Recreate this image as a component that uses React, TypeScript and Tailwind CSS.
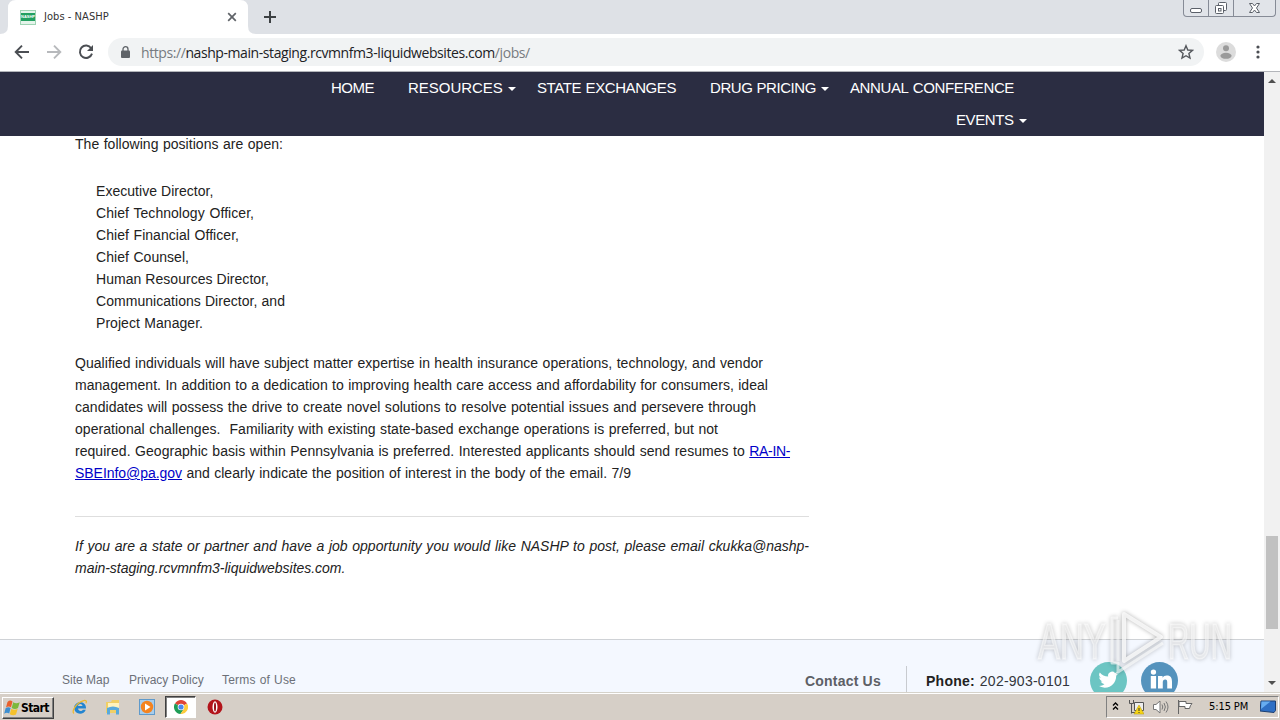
import clsx from "clsx";
import React from "react";

const positions = [
    { text: "Executive Director,", w: "w-[117px]" },
    { text: "Chief Technology Officer,", w: "w-[158px]" },
    { text: "Chief Financial Officer,", w: "w-[143px]" },
    { text: "Chief Counsel,", w: "w-[93px]" },
    { text: "Human Resources Director,", w: "w-[173px]" },
    { text: "Communications Director, and", w: "w-[189px]" },
    { text: "Project Manager.", w: "w-[107px]" },
];

function Line({ w, className, children }: { w: string; className?: string; children: React.ReactNode }) {
    return (
        <span className={clsx("block whitespace-nowrap [text-align-last:justify]", w, className)}>{children}</span>
    );
}

function Caret() {
    return <span className="ml-[5px] mt-px h-0 w-0 border-x-[4px] border-t-[4px] border-x-transparent border-t-white" />;
}

function TabStrip() {
    return (
        <div className="relative flex h-[34px] shrink-0 bg-[#dee1e6]">
            <svg className="h-[34px] w-[256px] shrink-0" viewBox="0 0 256 34">
                <path d="M0 34q8 0 8-8V8q0-8 8-8h224q8 0 8 8v18q0 8 8 8z" fill="#fff" />
            </svg>
            <div className="absolute left-5 top-0 flex h-[34px] items-center">
                <div className="flex h-[15px] w-4 flex-col justify-center border border-[#9fd3b4] bg-[#e4f4ea]">
                    <div className="flex h-[8px] items-center justify-center bg-[#22a060] font-['Liberation_Sans'] text-[4px] font-bold text-white">
                        NASHP
                    </div>
                </div>
                <span className="ml-2 w-[65px] whitespace-nowrap font-['DejaVu_Sans_Condensed','DejaVu_Sans',sans-serif] text-[11px] tracking-[0.05px] text-[#333]">
                    Jobs - NASHP
                </span>
            </div>
            <svg className="absolute left-[227px] top-3 h-[10px] w-[10px]" viewBox="0 0 10 10">
                <path d="M1.2 1.2l7.6 7.6M8.8 1.2L1.2 8.8" stroke="#5f6368" strokeWidth="1.7" />
            </svg>
            <svg className="ml-[7px] mt-[10px] h-[14px] w-[14px]" viewBox="0 0 14 14">
                <path d="M7 1v12M1 7h12" stroke="#3c4043" strokeWidth="2" />
            </svg>
            <div className="absolute right-[4px] top-0 flex h-[17px] w-[93px] rounded-b-[4px] border border-t-0 border-[#868b96] bg-[#e1e4e9]">
                <svg className="h-full w-full" viewBox="0 0 91 16" fill="none" stroke="#5b6069">
                    <path d="M24.5 0v16M49.5 0v16" stroke="#868b96" />
                    <rect x="6.5" y="8.5" width="11" height="4" rx="1.5" fill="#fff" />
                    <rect x="34.5" y="2.5" width="8" height="8" rx="1" fill="#fff" />
                    <rect x="31.5" y="5.5" width="8" height="8" rx="1" fill="#fff" />
                    <rect x="34.5" y="8.5" width="2.5" height="2.5" />
                    <path d="M65.5 3.500h3l2 2.500 2-2.500h3l-3 4.500 3 4.500h-3l-2-2.500-2 2.500h-3l3-4.500z" fill="#fff" />
                </svg>
            </div>
        </div>
    );
}

function Toolbar() {
    return (
        <div className="flex h-[38px] shrink-0 items-center border-b border-[#b3b5ba] bg-white pb-px">
            <svg className="ml-[14px] h-4 w-4" viewBox="0 0 16 16" fill="none" stroke="#4b4e53" strokeWidth="1.9">
                <path d="M15 8H2.5M8 1.7L1.7 8 8 14.3" />
            </svg>
            <svg className="ml-4 h-4 w-4" viewBox="0 0 16 16" fill="none" stroke="#b7b9bc" strokeWidth="1.9">
                <path d="M1 8h12.500M8 1.700L14.300 8 8 14.300" />
            </svg>
            <svg className="ml-4 h-4 w-4" viewBox="0 0 16 16" fill="none" stroke="#4b4e53" strokeWidth="1.9">
                <path d="M13.200 4.200A6.200 6.200 0 1 0 14 9.600" />
                <path d="M15 1v6H9z" fill="#4b4e53" stroke="none" />
            </svg>
            <div className="ml-[14px] flex h-[28px] w-[1096px] items-center rounded-full bg-[#f1f3f4]">
                <svg className="ml-[13px] h-3 w-[9px]" viewBox="0 0 9 12">
                    <path d="M2 5V3.200a2.500 2.500 0 0 1 5 0V5" fill="none" stroke="#5f6368" strokeWidth="1.300" />
                    <rect y="4.500" width="9" height="7.500" rx="1" fill="#5f6368" />
                </svg>
                <div className="ml-[11px] w-[389px] whitespace-nowrap font-['Open_Sans','Noto_Sans',sans-serif] text-[14px] tracking-[-0.42px] text-[#777b80]">
                    https://<span className="text-[#202124]">nashp-main-staging.rcvmnfm3-liquidwebsites.com</span>/jobs/
                </div>
                <svg className="ml-auto mr-[10px] h-4 w-4" viewBox="0 0 16 16" fill="none" stroke="#55585d" strokeWidth="1.400">
                    <path d="M8 1.700l1.800 4.300 4.700.4-3.600 3.100 1.100 4.600L8 11.700l-4 2.400 1.100-4.600L1.500 6.400l4.700-.4z" />
                </svg>
            </div>
            <svg className="ml-3 h-5 w-5" viewBox="0 0 20 20">
                <circle cx="10" cy="10" r="10" fill="#dcdcdc" />
                <circle cx="10" cy="6.200" r="3" fill="#9a9a9a" />
                <ellipse cx="10" cy="13.800" rx="5.600" ry="3" fill="#9a9a9a" />
            </svg>
            <svg className="ml-5 h-[14px] w-1" viewBox="0 0 4 14" fill="#4b4e53">
                <circle cx="2" cy="2" r="1.600" />
                <circle cx="2" cy="7" r="1.600" />
                <circle cx="2" cy="12" r="1.600" />
            </svg>
        </div>
    );
}

function SiteNav() {
    return (
        <nav className="relative z-10 h-16 bg-[#2b2d42] text-[15px] leading-8 text-white">
            <div className="flex h-8 items-center pl-[331px]">
                <Line w="w-[43px]" className="tracking-[-0.5px]">HOME</Line>
                <Line w="w-[95px]" className="ml-[34px] tracking-[-0.02px]">RESOURCES</Line>
                <Caret />
                <Line w="w-[139px]" className="ml-[21px] tracking-[-0.42px]">STATE EXCHANGES</Line>
                <Line w="w-[106px]" className="ml-[34px] tracking-[-0.42px]">DRUG PRICING</Line>
                <Caret />
                <Line w="w-[164px]" className="ml-[21px] tracking-[-0.38px]">ANNUAL CONFERENCE</Line>
            </div>
            <div className="flex h-8 items-center pl-[956px]">
                <Line w="w-[58px]" className="tracking-[-0.4px]">EVENTS</Line>
                <Caret />
            </div>
        </nav>
    );
}

function Article() {
    return (
        <main className="-mt-[3px] h-[506px] pl-[75px] text-[14px] leading-[22px] tracking-[0.04px] text-[#222]">
            <Line w="w-[208px]">The following positions are open:</Line>
            <ul className="ml-[21px] mt-[25px]">
                {positions.map((p) => (
                    <li key={p.text}>
                        <Line w={p.w}>{p.text}</Line>
                    </li>
                ))}
            </ul>
            <p className="mt-[18px]">
                <Line w="w-[688px]">Qualified individuals will have subject matter expertise in health insurance operations, technology, and vendor</Line>
                <Line w="w-[693px]">management. In addition to a dedication to improving health care access and affordability for consumers, ideal</Line>
                <Line w="w-[681px]">candidates will possess the drive to create novel solutions to resolve potential issues and persevere through</Line>
                <Line w="w-[643px]">operational challenges.&nbsp; Familiarity with existing state-based exchange operations is preferred, but not</Line>
                <Line w="w-[715px]">
                    required. Geographic basis within Pennsylvania is preferred. Interested applicants should send resumes to{" "}
                    <a className="tracking-[-0.35px] text-[#0000c8] underline">RA-IN-</a>
                </Line>
                <Line w="w-[556px]">
                    <a className="tracking-[-0.04px] text-[#0000c8] underline">SBEInfo@pa.gov</a> and clearly indicate the position of interest in the body of the email. 7/9
                </Line>
            </p>
            <hr className="mt-[32px] w-[734px] border-t border-[#dedede]" />
            <p className="mt-[18px] italic">
                <Line w="w-[734px]" className="tracking-[0.02px]">If you are a state or partner and have a job opportunity you would like NASHP to post, please email <span className="tracking-[-0.02px]">ckukka@nashp-</span></Line>
                <Line w="w-[271px]" className="tracking-[-0.03px]">main-staging.rcvmnfm3-liquidwebsites.com.</Line>
            </p>
        </main>
    );
}

function SiteFooter() {
    return (
        <footer className="flex h-[53px] overflow-hidden border-t border-[#cfd2d6] bg-[#f4f8ff] text-[#6c7078]">
            <div className="ml-[62px] mt-[30px] flex h-5 text-[12px] leading-5">
                <Line w="w-[47px]">Site Map</Line>
                <Line w="w-[74px]" className="ml-5">Privacy Policy</Line>
                <Line w="w-[74px]" className="ml-[19px] tracking-[0.2px]">Terms of Use</Line>
            </div>
            <div className="ml-[509px] mt-[31px] w-[77px] whitespace-nowrap text-[14px] font-bold leading-5 tracking-[0.2px] text-[#5d6066]">Contact Us</div>
            <div className="ml-6 mt-[26px] w-px bg-[#c8cbd0]" />
            <div className="ml-[19px] mt-[31px] h-5 text-[14px] leading-5 text-[#33363c]">
                <Line w="w-[144px]" className="tracking-[0.25px]">
                    <b className="text-[#222]">Phone:</b> 202-903-0101
                </Line>
            </div>
            <svg className="ml-5 mt-[22px] h-[37px] w-[37px] shrink-0" viewBox="0 0 37 37">
                <circle cx="18.500" cy="18.500" r="18.500" fill="#6cc5c3" />
                <path
                    transform="translate(8.500 7.800) scale(.82)"
                    d="M23.950 4.570a10 10 0 0 1-2.820.780 4.960 4.960 0 0 0 2.160-2.720c-.950.550-2 .950-3.130 1.180a4.920 4.920 0 0 0-8.380 4.480C7.690 8.090 4.070 6.130 1.640 3.160a4.820 4.820 0 0 0 1.520 6.570 4.900 4.900 0 0 1-2.230-.610v.060c0 2.380 1.700 4.370 3.950 4.820a5 5 0 0 1-2.210.090 4.940 4.940 0 0 0 4.600 3.420A9.870 9.870 0 0 1 0 19.540a13.990 13.990 0 0 0 7.560 2.210c9.050 0 14-7.500 14-13.980l-.020-.640a9.940 9.940 0 0 0 2.410-2.560z"
                    fill="#fff"
                />
            </svg>
            <svg className="ml-[14px] mt-[22px] h-[37px] w-[37px] shrink-0" viewBox="0 0 37 37">
                <circle cx="18.500" cy="18.500" r="18.500" fill="#5593bd" />
                <g fill="#fff" transform="translate(-.800 -1.800) scale(1.060)">
                    <circle cx="12.500" cy="11.200" r="2.500" />
                    <path d="M10 14.800h5v12h-5zM16.800 14.800h4.300v1.700c.8-1.300 2.200-2 4-2 3.900 0 4.900 2.500 4.900 5.900v6.400h-4.500v-6c0-1.700-.3-2.700-1.900-2.700s-2.300 1-2.300 2.700v6h-4.500z" />
                </g>
            </svg>
        </footer>
    );
}

function ScrollBar() {
    return (
        <div className="flex w-4 shrink-0 flex-col items-center bg-[#f1f1f1]">
            <span className="mt-[7px] h-0 w-0 border-x-[4px] border-b-[4px] border-x-transparent border-b-[#505050]" />
            <div className="mt-[453px] h-[93px] w-3 bg-[#c1c1c1]" />
            <span className="mt-[52px] h-0 w-0 border-x-[4px] border-t-[4px] border-x-transparent border-t-[#505050]" />
        </div>
    );
}

function Watermark() {
    return (
        <div className="absolute left-[1038px] top-[606px] flex h-[72px] w-[194px] items-center font-['Liberation_Sans',sans-serif] text-[50px] leading-none text-white/50 drop-shadow-[0_0_2px_rgba(0,0,0,0.4)]">
            <span className="mt-[-1px] w-[68px] origin-left scale-x-[.66] [-webkit-text-stroke:1.5px_rgba(255,255,255,0.4)]">ANY</span>
            <svg className="h-[72px] w-[62px] shrink-0" viewBox="0 0 62 72" fill="none" stroke="#fff" strokeLinejoin="round">
                <path d="M18 8L55 31 18 55z" strokeOpacity=".75" strokeWidth="4" />
                <path d="M12 12H6v45h6v9l45-29" strokeOpacity=".6" strokeWidth="3" />
                <path d="M12 14v41" strokeOpacity=".5" strokeWidth="3" />
            </svg>
            <span className="mt-[-1px] w-[64px] origin-left scale-x-[.59] [-webkit-text-stroke:1.5px_rgba(255,255,255,0.4)]">RUN</span>
        </div>
    );
}

function Taskbar() {
    return (
        <div className="flex h-7 shrink-0 items-center border-t border-[#d5d2ca] bg-[#d6cfc7] font-['DejaVu_Sans_Condensed','DejaVu_Sans',sans-serif] shadow-[inset_0_1px_0_#fff]">
            <div className="ml-[2px] mt-[2px] flex h-[22px] w-[52px] items-center border border-b-[#404040] border-l-white border-r-[#404040] border-t-white shadow-[inset_-1px_-1px_0_#808080]">
                <svg className="ml-[1px] h-4 w-4 shrink-0" viewBox="0 0 16 16">
                    <path d="M3.500 2q2.500-2.500 5-.5L7 7.300q-2.500-1.500-5 .2z" fill="#e8602c" />
                    <path d="M9.200 2.200q3 2 6.500 0L14 8q-3 1.800-6.300 0z" fill="#7cb83a" />
                    <path d="M1.600 8.300q2.700-1.800 5-.2L5.200 13.500q-2.500-1.500-5 .3z" fill="#3d8ed0" />
                    <path d="M7.300 8.700q3 2 6.400 0L12 14.500q-3 1.800-6.200-.3z" fill="#f6c22c" />
                </svg>
                <span className="ml-px text-[12px] font-bold tracking-[-0.6px] text-black">Start</span>
            </div>
            <svg className="ml-[18px] mt-px h-4 w-4" viewBox="0 0 16 16" fill="none">
                <path d="M14 9.500H6c.3 2.800 3.500 3.300 5 1.200h2.800C11.800 16.800 2 15.800 2.200 8.600 2.400 1.500 14.500 1 14 9.500zM6 7h4.500c-.2-2.700-4.200-2.700-4.500 0z" fill="#2385d0" fillRule="evenodd" />
                <path d="M2 14.500C-1 13 4 4 11 1.800c3-1 4 .2 3 2.400" stroke="#edb92e" strokeWidth="1.300" />
            </svg>
            <svg className="ml-[17px] mt-px h-4 w-4" viewBox="0 0 16 16">
                <path d="M1 3h5l1-2h7v13H1z" fill="#f0cf66" />
                <path d="M3 4h11v6H3z" fill="#fff3bd" />
                <path d="M2 15.500V9q6-3 12 0v6.500h-3V11H5v4.500z" fill="#58a9dc" />
            </svg>
            <svg className="ml-[18px] mt-px h-4 w-4" viewBox="0 0 16 16">
                <rect x=".5" y=".5" width="15" height="15" fill="#a7cdec" stroke="#5f9acb" />
                <circle cx="8" cy="8" r="6.200" fill="#f4831f" />
                <path d="M6 4.500l5.500 3.500L6 11.500z" fill="#fff" />
            </svg>
            <div className="ml-[10px] mt-px flex h-[22px] w-[31px] items-center justify-center border border-b-white border-l-[#404040] border-r-white border-t-[#404040] bg-white shadow-[inset_1px_1px_0_#808080]">
                <svg className="h-[14px] w-[14px]" viewBox="0 0 14 14">
                    <path d="M7 7L1 3.500A7 7 0 0 1 13 3.500z" fill="#df4436" />
                    <path d="M7 7L.9 3.500A7 7 0 0 0 6.500 14L10 8.700z" fill="#1f9d57" />
                    <path d="M7 7l6.100-3.500A7 7 0 0 1 6.500 14L10 8.700z" fill="#fdcb3c" />
                    <circle cx="7" cy="7" r="3.300" fill="#fff" />
                    <circle cx="7" cy="7" r="2.600" fill="#4a88ee" />
                </svg>
            </div>
            <svg className="ml-[11px] mt-px h-4 w-4" viewBox="0 0 16 16">
                <circle cx="8" cy="8" r="7.500" fill="#b3141b" />
                <ellipse cx="8" cy="8" rx="2.500" ry="5.800" fill="#fff" />
                <ellipse cx="8" cy="8" rx="1" ry="4.600" fill="#971018" />
            </svg>
            <div className="ml-auto mr-px mt-px flex h-[22px] w-[173px] items-center border border-b-white border-l-[#808080] border-r-white border-t-[#808080]">
                <svg className="-mt-[3px] ml-[5px] h-2 w-[7px]" viewBox="0 0 7 8" fill="none" stroke="#000" strokeWidth="1.300">
                    <path d="M1 3.500l2.500-2.500L6 3.500M1 7.500L3.500 5 6 7.500" />
                </svg>
                <svg className="ml-[9px] h-4 w-4" viewBox="0 0 16 16">
                    <path d="M1.500 1v3.500h4V1M3.500 4.500v10M3.500 13.500h5" fill="none" stroke="#555" />
                    <path d="M6.500 3.500h9v8h-9z" fill="#eee" stroke="#555" />
                    <path d="M11 6l5 9H6z" fill="#f7d514" stroke="#b39508" strokeWidth=".5" />
                    <path d="M11 9v3M11 13v1" stroke="#333" />
                </svg>
                <svg className="ml-[9px] h-[14px] w-4" viewBox="0 0 16 14" fill="none" stroke="#777">
                    <path d="M.5 4.500H3L7 1v12L3 9.500H.5z" fill="#fff" />
                    <path d="M9 4.500q1.500 2.500 0 5M11 3q2.800 4 0 8M13 1.500q4 5.500 0 11" />
                </svg>
                <svg className="ml-[8px] h-4 w-4" viewBox="0 0 16 16" fill="#fff" stroke="#666">
                    <path d="M1.500 1v14M2 2.500h7v2h6q-2 2-2.500 5H8v-2H2z" />
                </svg>
                <span className="ml-4 w-[40px] whitespace-nowrap text-[11px] tracking-[-0.1px] text-black">5:15 PM</span>
                <svg className="ml-[11px] h-[14px] w-4 shrink-0" viewBox="0 0 16 14">
                    <path d="M1 1h14.500v9.500L14 12.500 0 11z" fill="#2e6fc4" stroke="#1c3e70" />
                    <path d="M1.500 1.500h9L1 9z" fill="#67adf0" />
                </svg>
            </div>
        </div>
    );
}

export default function App() {
    return (
        <div className="relative flex h-[720px] w-[1280px] flex-col overflow-hidden bg-white font-['Liberation_Sans',Arial,sans-serif]">
            <TabStrip />
            <Toolbar />
            <div className="flex h-[620px] shrink-0 overflow-hidden">
                <div className="w-[1264px]">
                    <SiteNav />
                    <Article />
                    <SiteFooter />
                </div>
                <ScrollBar />
            </div>
            <Taskbar />
            <Watermark />
        </div>
    );
}
